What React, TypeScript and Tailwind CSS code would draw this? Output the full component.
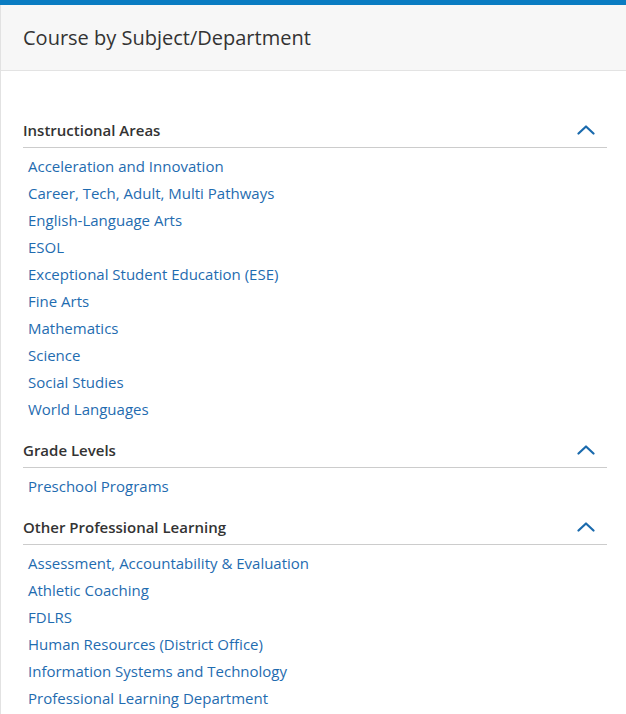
import React from "react";

const sections: { title: string; items: string[] }[] = [
  {
    title: "Instructional Areas",
    items: [
      "Acceleration and Innovation",
      "Career, Tech, Adult, Multi Pathways",
      "English-Language Arts",
      "ESOL",
      "Exceptional Student Education (ESE)",
      "Fine Arts",
      "Mathematics",
      "Science",
      "Social Studies",
      "World Languages",
    ],
  },
  { title: "Grade Levels", items: ["Preschool Programs"] },
  {
    title: "Other Professional Learning",
    items: [
      "Assessment, Accountability & Evaluation",
      "Athletic Coaching",
      "FDLRS",
      "Human Resources (District Office)",
      "Information Systems and Technology",
      "Professional Learning Department",
    ],
  },
];

function Chevron() {
  return (
    <svg width="18" height="10" viewBox="0 0 18 10" fill="none">
      <path d="M1.5 8.5 L9 1.5 L16.5 8.5" stroke="#1a6aad" strokeWidth="2.2" strokeLinecap="round" strokeLinejoin="round" />
    </svg>
  );
}

export default function App() {
  return (
    <div className="w-[626px] h-[714px] overflow-hidden bg-white" style={{ fontFamily: '"Open Sans", sans-serif' }}>
      <div className="h-[5px] bg-[#0a7cc2]" />
      <div className="border-l border-[#e2e2e2] min-h-[709px]">
        <div className="h-[66px] bg-[#f7f7f7] border-b border-[#e3e3e3] pl-[22px] flex items-center pb-[1px]">
          <h1 className="text-[20px] leading-[24px] text-[#333] pt-[2px]">Course by Subject/Department</h1>
        </div>
        <div className="pl-[22px] pr-[19px] pt-[49px]">
          {sections.map((s) => (
            <div key={s.title} className="mb-[16px]">
              <div className="flex items-center justify-between border-b border-[#cccccc] h-[28px] pb-[7px]">
                <span className="text-[15px] leading-[20px] font-semibold text-[#333]">{s.title}</span>
                <span className="mr-[12px] mt-[-1px] flex"><Chevron /></span>
              </div>
              <ul className="pt-[5px] pb-[1px] pl-[5px]">
                {s.items.map((it) => (
                  <li key={it} className="text-[15px] leading-[27px] text-[#1f6cb0]">
                    {it}
                  </li>
                ))}
              </ul>
            </div>
          ))}
        </div>
      </div>
    </div>
  );
}
